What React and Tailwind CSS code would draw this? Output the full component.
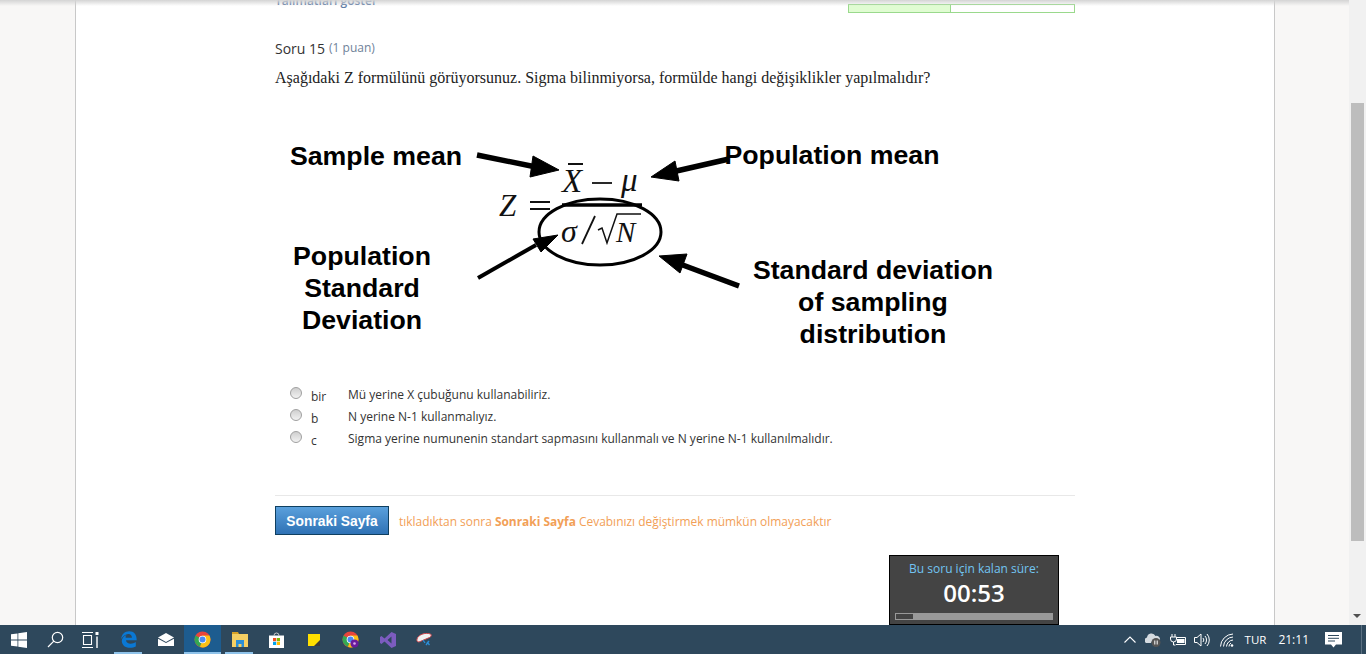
import React from "react";

const answers = [
  { key: "bir", text: "Mü yerine X çubuğunu kullanabiliriz." },
  { key: "b", text: "N yerine N-1 kullanmalıyız." },
  { key: "c", text: "Sigma yerine numunenin standart sapmasını kullanmalı ve N yerine N-1 kullanılmalıdır." },
];

const FormulaImage = () => (
  <svg width="730" height="260" viewBox="275 110 730 260" className="block">
    <g fontFamily="'Liberation Sans', sans-serif" fontWeight="700" fontSize="26.7" fill="#000" textAnchor="middle">
      <text x="376" y="164">Sample mean</text>
      <text x="832" y="163">Population mean</text>
      <text x="362" y="264">Population</text>
      <text x="362" y="296">Standard</text>
      <text x="362" y="328">Deviation</text>
      <text x="873" y="278">Standard deviation</text>
      <text x="873" y="310">of sampling</text>
      <text x="873" y="342">distribution</text>
    </g>
    <g fontFamily="'Liberation Serif', serif" fontStyle="italic" fill="#111">
      <text x="562" y="191" fontSize="33">X</text>
      <text x="621" y="190" fontSize="33">μ</text>
      <text x="499" y="215" fontSize="31">Z</text>
      <text x="561" y="241" fontSize="32">σ</text>
      <text x="616" y="241" fontSize="29">N</text>
    </g>
    <g stroke="#111" fill="none">
      <path d="M568 163h15" strokeWidth="2" />
      <path d="M592 182h20" strokeWidth="1.8" />
      <path d="M530 201h20M530 208h20" strokeWidth="1.8" />
      <path d="M562 204h80" strokeWidth="3.5" stroke="#000" />
      <path d="M582 243L595 215" strokeWidth="1.8" />
      <path d="M598 229l4-2 5 15 10-29h24" strokeWidth="1.5" />
      <ellipse cx="600" cy="231" rx="61" ry="33" strokeWidth="3" stroke="#000" />
    </g>
    <g fill="#000" stroke="#000">
      <path d="M477 154L536 166" strokeWidth="5.500" />
      <path d="M559 169L533 155L530 176Z" strokeWidth="1" />
      <path d="M729 158L672 171" strokeWidth="5.500" />
      <path d="M651 176L675 160L679 180Z" strokeWidth="1" />
      <path d="M478 277L536 244" strokeWidth="4" />
      <path d="M558 234L533 238L541 251Z" strokeWidth="1" />
      <path d="M739 285L680 263" strokeWidth="5.500" />
      <path d="M659 255L687 253L680 272Z" strokeWidth="1" />
    </g>
  </svg>
);

const ChromeIcon = ({ badge }) => (
  <svg width="17" height="17" viewBox="0 0 17 17">
    <circle cx="8.5" cy="8.5" r="8" fill="#e8453c" />
    <path d="M8.5 8.5L1.6 4.5A8 8 0 0 0 6 16.1Z" fill="#34a853" />
    <path d="M8.5 8.5L6 16.1A8 8 0 0 0 16.5 8.5 8 8 0 0 0 15.4 4.5H8.5Z" fill="#fbc116" />
    <circle cx="8.5" cy="8.5" r="3.8" fill="#fff" />
    <circle cx="8.5" cy="8.5" r="3" fill="#4a8af4" />
    {badge && <circle cx="12.5" cy="12.5" r="4" fill="#6a1b9a" />}
    {badge && <circle cx="12.5" cy="12.5" r="1.3" fill="#d9a6f0" />}
  </svg>
);

const AppButton = ({ active, running, children }) => (
  <div className={`relative flex h-full w-[37px] items-center justify-center ${active ? "bg-[#1d5c8f]" : ""}`}>
    {children}
    {running && <div className={`absolute bottom-0 h-[2px] bg-[#8fc3ea] ${active ? "left-0 w-full" : "left-[4px] w-[28px]"}`} />}
  </div>
);

const Taskbar = () => (
  <div className="flex h-[29px] shrink-0 items-center bg-[#2e485c]">
    <AppButton>
      <svg width="16" height="16" viewBox="0 0 16 16" fill="#fff">
        <path d="M0 2.3l6.5-.9v6.2H0zM7.3 1.3L16 0v7.6H7.3zM0 8.4h6.5v6.2L0 13.7zM7.3 8.4H16V16l-8.7-1.2z" />
      </svg>
    </AppButton>
    <AppButton>
      <svg width="17" height="17" viewBox="0 0 17 17" fill="none" stroke="#fff" strokeWidth="1.2">
        <circle cx="10.5" cy="6.5" r="5.2" />
        <path d="M6.8 10.2L1 16" />
      </svg>
    </AppButton>
    <div className="-ml-[2px] mr-[1px]">
      <svg width="17" height="16" viewBox="0 0 17 16" fill="none" stroke="#fff" strokeWidth="1.1" className="mx-[10px]">
        <path d="M0 .5h11M0 15.5h11M1.5 3.500h8v9h-8z" />
        <path d="M15 4.500V16" strokeWidth="1.4" />
        <path d="M13.500 0h3v3h-3z" fill="#fff" stroke="none" />
      </svg>
    </div>
    <AppButton running>
      <svg width="16" height="17" viewBox="0 0 16 17">
        <path
          d="M.2 8C.6 3 4 .3 8.3.3c4.600 0 7.400 3.100 7.400 8.900H5c.2 3.900 6 4.500 9.800 1.900v4.400c-4.400 2.400-13.200 2.100-14-5.300C.600 8.400 2.300 5 5.600 4 4.700 4.900 4.400 5.800 4.700 6.700h6.200C11 4 9.200 2.700 7.200 2.900 4.600 3.100 2 5 .2 8z"
          fill="#0a78d4"
        />
      </svg>
    </AppButton>
    <AppButton>
      <svg width="16" height="13" viewBox="0 0 16 13">
        <path d="M0 4.500L8 0l8 4.500L8 9z" fill="#fff" />
        <path d="M0 5.700L8 10l8-4.300V13H0z" fill="#fff" />
      </svg>
    </AppButton>
    <AppButton active running>
      <ChromeIcon />
    </AppButton>
    <AppButton running>
      <svg width="16" height="15" viewBox="0 0 16 15">
        <path d="M0 0h6l1 2h-7z" fill="#d9a326" />
        <path d="M0 2h16v13H0z" fill="#f5cf63" />
        <path d="M4 8h8v7h-2.500v-3h-3v3H4z" fill="#2a8ed8" />
      </svg>
    </AppButton>
    <AppButton>
      <svg width="15" height="16" viewBox="0 0 15 16">
        <path d="M5 3.500a2.500 2.500 0 0 1 5 0" fill="none" stroke="#ccc" strokeWidth="1" />
        <path d="M0 3.500h15V16H0z" fill="#fff" />
        <path d="M4 6h3.200v3.200H4z" fill="#f25022" />
        <path d="M7.800 6H11v3.200H7.800z" fill="#7fba00" />
        <path d="M4 9.800h3.200V13H4z" fill="#00a4ef" />
        <path d="M7.800 9.800H11V13H7.800z" fill="#ffb900" />
      </svg>
    </AppButton>
    <AppButton>
      <svg width="12" height="12" viewBox="0 0 12 12">
        <path d="M0 0h12v12H0z" fill="#ffdf00" />
        <path d="M6 12l6-6v6z" fill="#3a3a3a" />
      </svg>
    </AppButton>
    <AppButton>
      <ChromeIcon badge />
    </AppButton>
    <AppButton>
      <svg width="16" height="16" viewBox="0 0 16 16">
        <path d="M11.500 0L16 2v12l-4.500 2L4.500 9.500 1.500 12 0 11V5l1.500-1 3 2.500zM11.500 4.500L7.500 8l4 3.500z" fill="#7c5cbf" fillRule="evenodd" />
      </svg>
    </AppButton>
    <AppButton>
      <svg width="17" height="14" viewBox="0 0 17 14">
        <path d="M1 6C2 2 9-1 14.500 1c1.500 1 .5 3-1 3.500L3 9C1.500 9 .5 8 1 6z" fill="#f2f2f2" stroke="#c9454b" strokeWidth="1" />
        <path d="M7 7l2 3M11 9l2.500 3M13 8l-3 4" stroke="#2a8ed8" strokeWidth="1.300" fill="none" />
      </svg>
    </AppButton>

    {/* tray */}
    <div className="relative ml-auto flex h-full items-center text-white">
      <svg width="12" height="7" viewBox="0 0 12 7" fill="none" stroke="#fff" strokeWidth="1.100" className="mr-[9px]">
        <path d="M.5 6.500L6 1l5.500 5.500" />
      </svg>
      <svg width="16" height="14" viewBox="0 0 16 14" className="mr-[9px]">
        <path d="M1 10a3 3 0 0 1 1-5.500A4.500 4.500 0 0 1 10.500 3 3.500 3.500 0 0 1 15 7H9a4 4 0 0 0-3 3z" fill="#d5dbe0" />
        <circle cx="11" cy="9.500" r="4.500" fill="#555" />
        <path d="M9.800 7.500v4M12.200 7.500v4" stroke="#fff" strokeWidth="1" />
      </svg>
      <svg width="16" height="12" viewBox="0 0 16 12" className="mr-[8px]">
        <path d="M2 0v3M5 0v3M.5 3h6v2a3 3 0 0 1-6 0zM3.500 8v3h2" stroke="#fff" strokeWidth="1" fill="none" />
        <path d="M6 3.500h9.500v7H6" fill="none" stroke="#fff" strokeWidth="1" />
        <path d="M7 5h7.500v4H7z" fill="#fff" />
      </svg>
      <svg width="17" height="14" viewBox="0 0 17 14" fill="none" stroke="#fff" strokeWidth="1" className="mr-[9px]">
        <path d="M.5 4.500h2.500L7 1v12L3 9.500H.5z" />
        <path d="M9 5a3 3 0 0 1 0 4M11 3a6 6 0 0 1 0 8M13 1a9 9 0 0 1 0 12" />
      </svg>
      <svg width="14" height="14" viewBox="0 0 14 14" fill="none" stroke="#fff" strokeWidth="1" className="mr-[11px]">
        <path d="M.5 13.500A13 13 0 0 1 13 1M3.500 13.500A10 10 0 0 1 13 4M6.500 13.500A7 7 0 0 1 13 7M9 13.500A4 4 0 0 1 11 10" />
        <circle cx="12" cy="12.500" r="1.300" fill="#fff" stroke="none" />
      </svg>
      <span className="mr-[12px] font-['Open_Sans',sans-serif] text-[11.5px]">TUR</span>
      <span className="mr-[16px] font-['Open_Sans',sans-serif] text-[12px]">21:11</span>
      <svg width="17" height="16" viewBox="0 0 17 16" className="mr-[24px]">
        <path d="M0 0h17v12.500h-6L8.500 15.500 6 12.500H0z" fill="#fff" />
        <path d="M3 3.500h11M3 6.300h11M3 9h7" stroke="#2e485c" strokeWidth="1" />
      </svg>
      <div className="absolute right-[4px] top-0 h-full w-px bg-[#5b7082]" />
    </div>
  </div>
);

export default function App() {
  return (
    <div className="flex h-[654px] w-[1366px] flex-col overflow-hidden font-['Open_Sans',sans-serif]">
      <div className="relative flex min-h-0 flex-1 bg-[#f8f7f6]">
        <div className="w-[75px] shrink-0" />

        {/* page */}
        <div className="h-full w-[1200px] shrink-0 overflow-hidden border-x border-[#c8c8c8] bg-white pl-[199px] pr-[199px]">
          <div className="flex h-[12px] items-start justify-between">
            <span className="-mt-[5px] text-[12px] font-semibold leading-[12px] text-[#5f7ca6]">Talimatları göster</span>
            <div className="mt-[4px] flex h-[9px] w-[227px] border border-[#9ad98c]">
              <div className="w-[102px] border-r border-[#9ad98c] bg-[#e0fcd2]" />
            </div>
          </div>

          <div className="mt-[28px] flex h-[16px] items-center gap-[4px]">
            <span className="text-[14px] text-[#333]">Soru 15</span>
            <span className="text-[12px] text-[#6f8299]">(1 puan)</span>
          </div>
          <p className="mt-[11px] font-['Liberation_Serif',serif] text-[16px] leading-[22px] text-[#222]">
            Aşağıdaki Z formülünü görüyorsunuz. Sigma bilinmiyorsa, formülde hangi değişiklikler yapılmalıdır?
          </p>

          <div className="mt-[22px]">
            <FormulaImage />
          </div>

          <div className="mt-[12px] flex flex-col">
            {answers.map((a) => (
              <div key={a.key} className="flex h-[22px] items-center text-[12px] text-[#333]">
                <span className="-mt-[3px] ml-[15px] h-[12px] w-[12px] rounded-full border border-[#a0a0a0] bg-gradient-to-b from-[#cfcfcf] to-[#f2f2f2]" />
                <span className="ml-[9px] mt-[5px] w-[37px]">{a.key}</span>
                <span className="mt-[2px]">{a.text}</span>
              </div>
            ))}
          </div>

          <div className="mt-[46px] border-t border-[#e8e8e8]" />

          <div className="mt-[10px] flex items-center gap-[10px]">
            <button className="h-[29px] w-[114px] border border-[#0f3f60] bg-gradient-to-b from-[#5aa0dc] to-[#2f72b5] pt-[3px] font-['Liberation_Sans',sans-serif] text-[13.8px] font-bold text-white">
              Sonraki Sayfa
            </button>
            <span className="mt-[3px] text-[11.95px] text-[#f2a057]">
              tıkladıktan sonra <b className="font-bold">Sonraki Sayfa</b> Cevabınızı değiştirmek mümkün olmayacaktır
            </span>
          </div>
        </div>

        <div className="flex-1" />

        {/* scrollbar */}
        <div className="flex h-full w-[17px] shrink-0 flex-col bg-[#f1f1f1]">
          <div className="ml-[2px] mt-[103px] h-[438px] w-[13px] bg-[#bdbdbd]" />
          <div className="mb-[7px] ml-[4px] mt-auto h-0 w-0 border-x-[4px] border-t-[4px] border-x-transparent border-t-[#505050]" />
        </div>

        {/* top shadow of the fixed header */}
        <div className="absolute left-0 top-0 h-[6px] w-[1349px] bg-gradient-to-b from-[#d4d4d4] to-transparent" />

        {/* timer */}
        <div className="absolute left-[889px] top-[555px] flex h-[70px] w-[170px] flex-col items-center border border-black bg-[#444]">
          <span className="mt-[5px] text-[12px] leading-[16px] text-[#72c4f2]">Bu soru için kalan süre:</span>
          <span className="text-[24px] font-semibold leading-[32px] text-white">00:53</span>
          <div className="mt-[4px] h-[7px] w-[158px] bg-[#999]">
            <div className="h-full w-[19px] border border-[#999] bg-[#444]" />
          </div>
        </div>
      </div>
      <Taskbar />
    </div>
  );
}
